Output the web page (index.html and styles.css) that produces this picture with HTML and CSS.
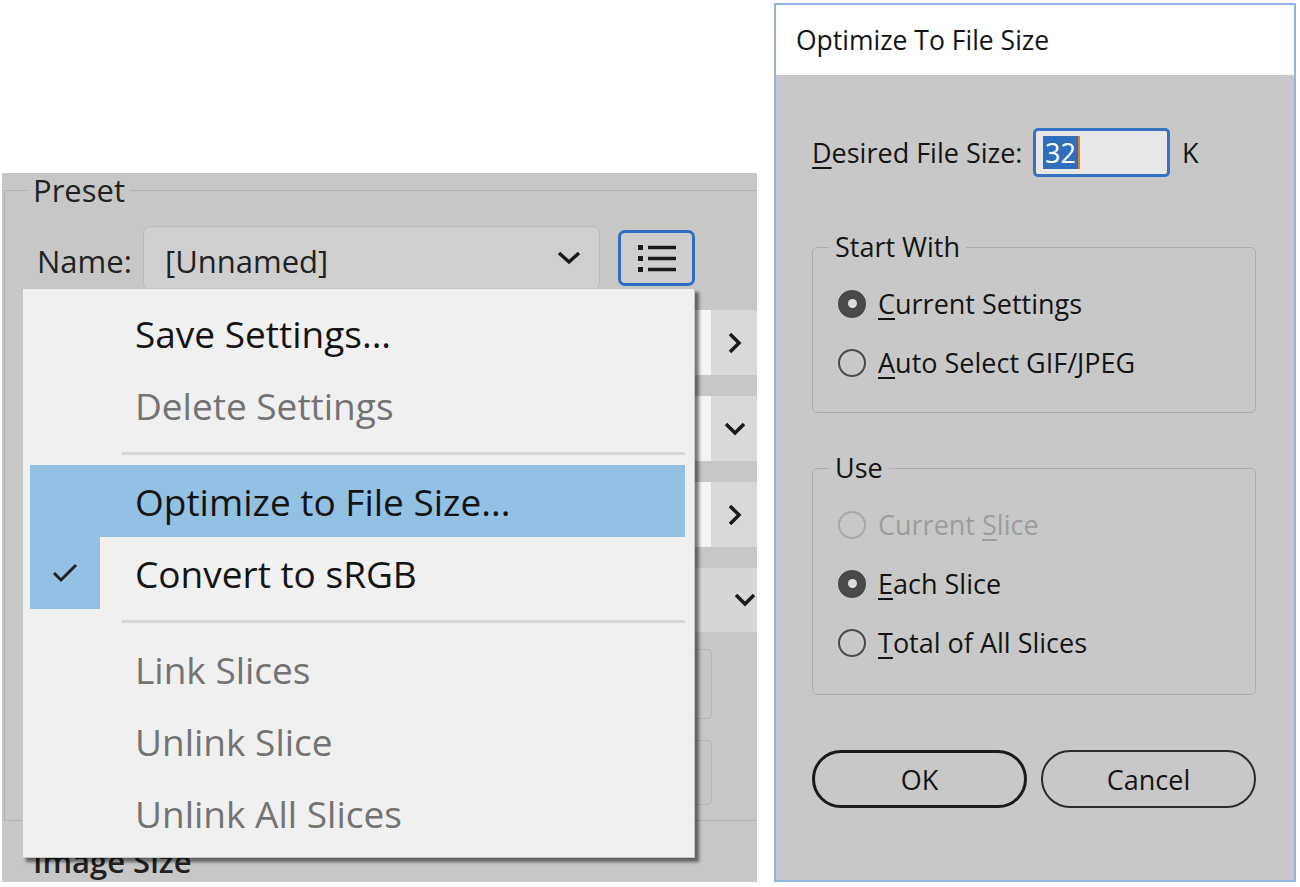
FILE: index.html
```html
<!DOCTYPE html>
<html lang="en">
<head>
    <meta charset="UTF-8">
    <title>Optimize To File Size</title>
    <link rel="stylesheet" href="styles.css">
</head>
<body>
    <div class="screen">
        <!-- Save for Web side panel with the preset flyout menu open -->
        <div class="left">
            <div class="panel">
                <fieldset class="preset">
                    <legend>Preset</legend>
                    <div class="name-row">
                        <span class="name-label">Name:</span>
                        <div class="select">
                            <span>[Unnamed]</span>
                            <svg width="24" height="14" viewBox="0 0 24 14"><polyline points="2,2 12,11 22,2" fill="none" stroke="#1a1a1a" stroke-width="3.5"/></svg>
                        </div>
                        <button class="menu-btn">
                            <svg width="42" height="32" viewBox="0 0 42 32">
                                <rect x="2" y="3" width="5" height="5" fill="#1a1a1a"/>
                                <rect x="2" y="14" width="5" height="5" fill="#1a1a1a"/>
                                <rect x="2" y="25" width="5" height="5" fill="#1a1a1a"/>
                                <line x1="12" y1="5.5" x2="40" y2="5.5" stroke="#1a1a1a" stroke-width="3.5"/>
                                <line x1="12" y1="16.5" x2="40" y2="16.5" stroke="#1a1a1a" stroke-width="3.5"/>
                                <line x1="12" y1="27.5" x2="40" y2="27.5" stroke="#1a1a1a" stroke-width="3.5"/>
                            </svg>
                        </button>
                    </div>

                    <div class="ctrl-rows">
                        <div class="ctrl-row">
                            <div class="ctrl-field"></div>
                            <div class="ctrl-btn"><svg width="14" height="22" viewBox="0 0 14 22"><polyline points="2,2 11,11 2,20" fill="none" stroke="#1a1a1a" stroke-width="3.5"/></svg></div>
                        </div>
                        <div class="ctrl-row">
                            <div class="ctrl-field"></div>
                            <div class="ctrl-btn"><svg width="22" height="14" viewBox="0 0 22 14"><polyline points="2,2 11,11 20,2" fill="none" stroke="#1a1a1a" stroke-width="3.5"/></svg></div>
                        </div>
                        <div class="ctrl-row">
                            <div class="ctrl-field"></div>
                            <div class="ctrl-btn"><svg width="14" height="22" viewBox="0 0 14 22"><polyline points="2,2 11,11 2,20" fill="none" stroke="#1a1a1a" stroke-width="3.5"/></svg></div>
                        </div>
                        <div class="ctrl-row wide">
                            <svg width="22" height="14" viewBox="0 0 22 14"><polyline points="2,2 11,11 20,2" fill="none" stroke="#1a1a1a" stroke-width="3.5"/></svg>
                        </div>
                        <div class="ctrl-box tall"></div>
                        <div class="ctrl-box"></div>
                    </div>
                </fieldset>
                <div class="group-title">Image Size</div>

                <div class="menu">
                    <div class="menu-item"><span class="menu-icon"></span>Save Settings...</div>
                    <div class="menu-item disabled"><span class="menu-icon"></span>Delete Settings</div>
                    <div class="menu-sep"></div>
                    <div class="menu-item active"><span class="menu-icon"></span>Optimize to File Size...</div>
                    <div class="menu-item"><span class="menu-icon checked"><svg width="28" height="22" viewBox="0 0 28 22"><polyline points="3,11 10,18 25,3" fill="none" stroke="#222" stroke-width="3"/></svg></span>Convert to sRGB</div>
                    <div class="menu-sep"></div>
                    <div class="menu-item disabled"><span class="menu-icon"></span>Link Slices</div>
                    <div class="menu-item disabled"><span class="menu-icon"></span>Unlink Slice</div>
                    <div class="menu-item disabled"><span class="menu-icon"></span>Unlink All Slices</div>
                </div>
            </div>
        </div>

        <!-- Optimize To File Size dialog -->
        <div class="dialog">
            <div class="dlg-title">Optimize To File Size</div>
            <div class="dlg-body">
                <div class="size-row">
                    <span class="size-label"><u>D</u>esired File Size:</span>
                    <div class="size-input"><span class="sel">32</span><span class="caret"></span></div>
                    <span class="unit">K</span>
                </div>

                <fieldset class="dlg-group start-with">
                    <legend>Start With</legend>
                    <div class="radio-row"><span class="radio on"></span><span><u>C</u>urrent Settings</span></div>
                    <div class="radio-row"><span class="radio"></span><span><u>A</u>uto Select GIF/JPEG</span></div>
                </fieldset>

                <fieldset class="dlg-group use">
                    <legend>Use</legend>
                    <div class="radio-row disabled"><span class="radio"></span><span>Current <u>S</u>lice</span></div>
                    <div class="radio-row"><span class="radio on"></span><span><u>E</u>ach Slice</span></div>
                    <div class="radio-row"><span class="radio"></span><span><u>T</u>otal of All Slices</span></div>
                </fieldset>

                <div class="dlg-buttons">
                    <button class="btn default">OK</button>
                    <button class="btn">Cancel</button>
                </div>
            </div>
        </div>
    </div>
</body>
</html>
```

FILE: styles.css
```css
:root {
    --panel-gray: #c7c7c7;
    --menu-bg: #f0f0f0;
    --highlight: #93c1e4;
    --text: #141414;
    --disabled: #737373;
}

* {
    margin: 0;
    padding: 0;
    box-sizing: border-box;
}

body {
    width: 1300px;
    height: 887px;
    overflow: hidden;
    background-color: #fff;
    color: var(--text);
    font-family: "Open Sans", "Noto Sans", sans-serif;
    font-weight: 500;
}

.screen {
    display: flex;
}

/* ---- left panel ---- */

.left {
    width: 774px;
    padding: 173px 0 0 2px;
}

.panel {
    position: relative;
    width: 755px;
    height: 709px;
    padding-top: 1px;
    background-color: var(--panel-gray);
}

.preset {
    margin: 0 0 0 2px;
    padding: 20px 0 15px 32px;
    border: 1px solid #b1b1b1;
    border-right: none;
    font-size: 31px;
}

.preset legend {
    margin-left: -9px;
    padding: 0 5px;
    line-height: 32px;
    color: #222;
}

.name-row {
    display: flex;
    align-items: center;
    height: 64px;
}

.name-label {
    width: 106px;
    padding-top: 6px;
    color: #222;
}

.select {
    width: 457px;
    height: 64px;
    display: flex;
    align-items: center;
    justify-content: space-between;
    padding: 6px 18px 0 21px;
    background-color: #cfcfcf;
    border: 1px solid #bababa;
    border-radius: 7px;
    color: #222;
}

.select svg {
    margin-top: -6px;
}

.menu-btn {
    margin-left: 18px;
    width: 77px;
    height: 56px;
    display: flex;
    align-items: center;
    justify-content: center;
    background-color: #cecece;
    border: 3px solid #2d6cc0;
    border-radius: 7px;
}

.ctrl-rows {
    margin-top: 20px;
    display: flex;
    flex-direction: column;
    gap: 21px;
}

.ctrl-row {
    height: 65px;
    display: flex;
    background-color: #d8d8d8;
}

.ctrl-field {
    flex: 1;
    margin-right: 1px;
    background-color: #f4f4f4;
}

.ctrl-btn {
    width: 45px;
    display: flex;
    align-items: center;
    justify-content: center;
    background-color: #d9d9d9;
}

.ctrl-row.wide {
    height: 64px;
    align-items: center;
    justify-content: flex-end;
    padding-right: 1px;
    background-color: #d6d6d6;
}

.ctrl-box {
    height: 65px;
    margin-right: 45px;
    border: 1px solid #b4b4b4;
    border-radius: 5px;
}

.ctrl-box.tall {
    height: 70px;
    margin-top: -4px;
}

.group-title {
    margin: 23px 0 0 31px;
    font-size: 31px;
    line-height: 34px;
    font-weight: 600;
    color: #222;
}

/* ---- flyout menu ---- */

.menu {
    position: absolute;
    left: 20px;
    top: 115px;
    width: 673px;
    height: 570px;
    padding: 8px 9px 0 7px;
    background-color: var(--menu-bg);
    border: 1px solid #c6c6c6;
    box-shadow: 4px 4px 3px rgba(0, 0, 0, 0.5);
    font-size: 37px;
}

.menu-item {
    height: 72px;
    display: flex;
    align-items: center;
}

.menu-icon {
    width: 70px;
    height: 72px;
    margin-right: 35px;
    display: flex;
    align-items: center;
    justify-content: center;
}

.menu-icon.checked {
    background-color: var(--highlight);
}

.menu-item.active {
    background-color: var(--highlight);
}

.menu-item.disabled {
    color: var(--disabled);
}

.menu-sep {
    height: 24px;
    padding-left: 92px;
    display: flex;
    align-items: center;
}

.menu-sep::after {
    content: "";
    flex: 1;
    height: 3px;
    background-color: #d7d7d7;
}

/* ---- dialog ---- */

.dialog {
    margin-top: 3px;
    width: 522px;
    height: 879px;
    display: flex;
    flex-direction: column;
    background-color: #c8c8c8;
    border: 2px solid #8db7df;
}

.dlg-title {
    height: 70px;
    flex-shrink: 0;
    display: flex;
    align-items: center;
    padding-left: 20px;
    background-color: #fff;
    font-size: 26.5px;
}

.dlg-body {
    padding: 53px 38px 0 36px;
    font-size: 27px;
}

u {
    text-decoration-thickness: 2px;
    text-underline-offset: 4px;
}

.size-row {
    height: 49px;
    display: flex;
    align-items: center;
}

.size-label {
    width: 221px;
}

.size-input {
    width: 137px;
    height: 49px;
    display: flex;
    align-items: center;
    padding-left: 7px;
    background-color: #e8e8e8;
    border: 3px solid #3673c1;
    border-radius: 5px;
}

.sel {
    padding: 0 2px;
    line-height: 33px;
    background-color: #2f6ebd;
    color: #fff;
}

.caret {
    width: 2px;
    height: 33px;
    background-color: #e27b2a;
}

.unit {
    margin-left: 12px;
}

.dlg-group {
    border: 1px solid #adadad;
    border-radius: 5px;
    padding: 12px 0 20px 25px;
}

.dlg-group legend {
    margin-left: -9px;
    padding: 0 6px;
    line-height: 30px;
}

.start-with {
    margin-top: 55px;
}

.use {
    margin-top: 40px;
    padding-bottom: 22px;
}

.radio-row {
    height: 59px;
    display: flex;
    align-items: center;
    gap: 12px;
}

.radio {
    width: 28px;
    height: 28px;
    display: flex;
    align-items: center;
    justify-content: center;
    border: 2px solid #4a4a4a;
    border-radius: 50%;
}

.radio.on {
    background-color: #4a4a4a;
}

.radio.on::after {
    content: "";
    width: 9px;
    height: 9px;
    border-radius: 50%;
    background-color: #dedede;
}

.radio-row.disabled {
    color: #9d9d9d;
}

.radio-row.disabled .radio {
    border-color: #a8a8a8;
}

.dlg-buttons {
    margin-top: 55px;
    display: flex;
    gap: 14px;
}

.btn {
    width: 215px;
    height: 58px;
    background: transparent;
    border: 2px solid #2c2c2c;
    border-radius: 29px;
    font-family: inherit;
    font-weight: 500;
    font-size: 27px;
    color: var(--text);
}

.btn.default {
    border: 3px solid #1b1b1b;
}
```
